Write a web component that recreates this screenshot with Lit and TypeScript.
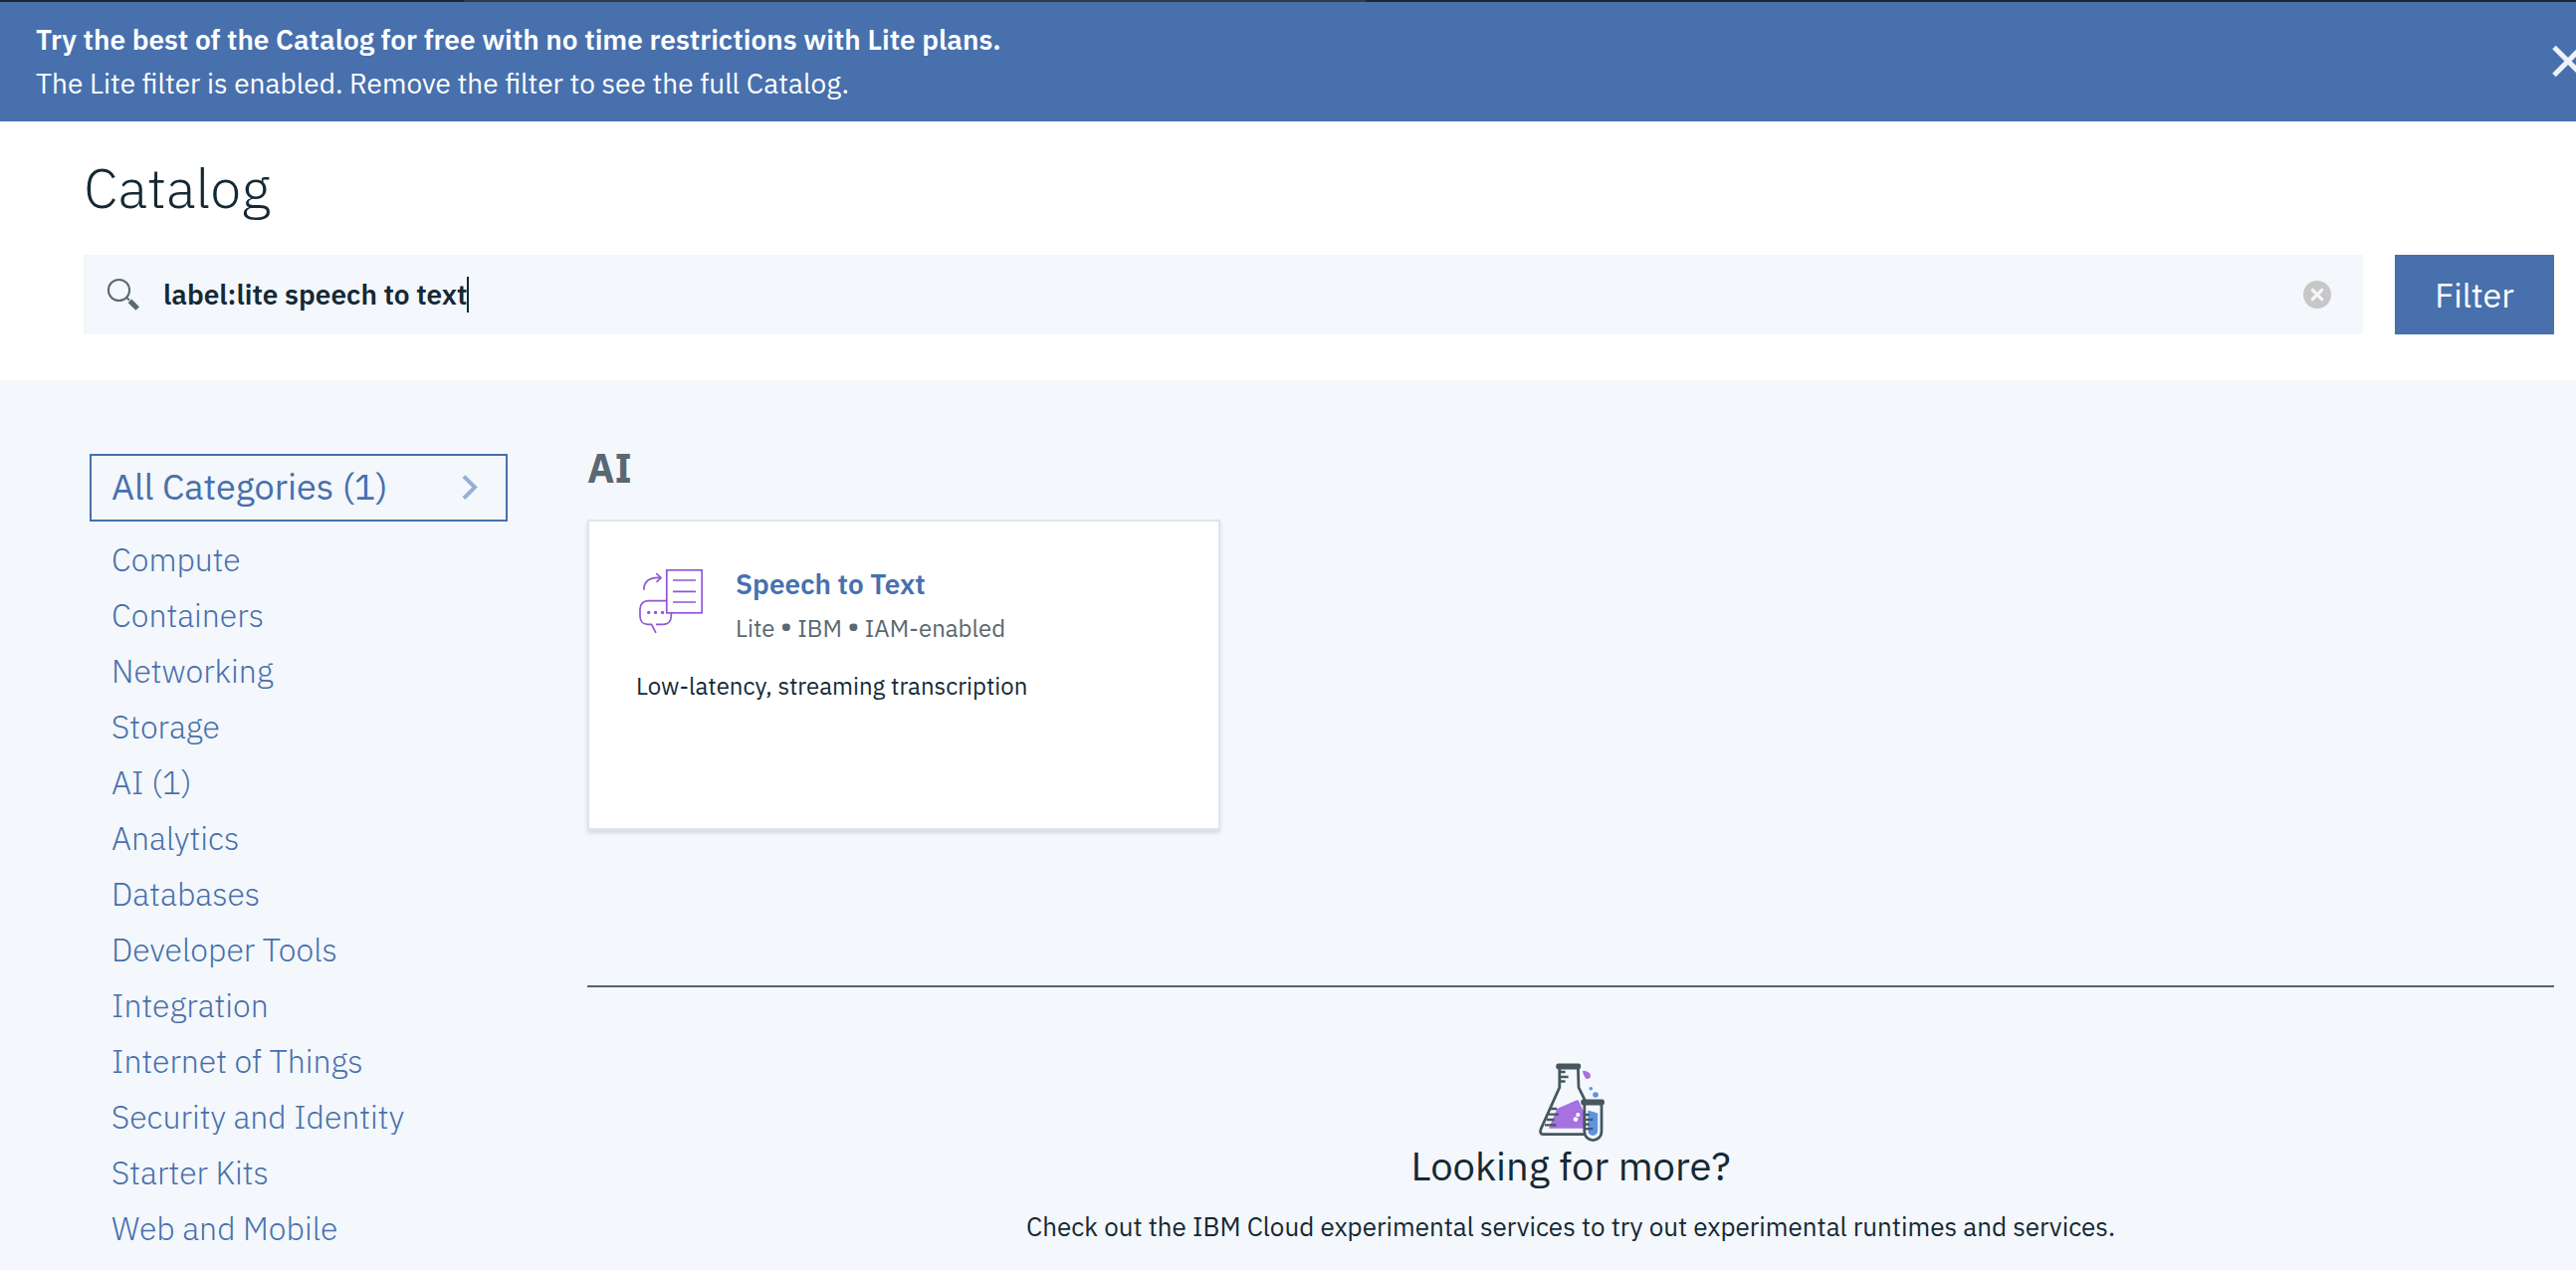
import { LitElement, html, css } from "lit";
import { customElement, property, state } from "lit/decorators.js";

interface Category {
  name: string;
  count?: number;
}

const CATEGORIES: Category[] = [
  { name: "Compute" },
  { name: "Containers" },
  { name: "Networking" },
  { name: "Storage" },
  { name: "AI", count: 1 },
  { name: "Analytics" },
  { name: "Databases" },
  { name: "Developer Tools" },
  { name: "Integration" },
  { name: "Internet of Things" },
  { name: "Security and Identity" },
  { name: "Starter Kits" },
  { name: "Web and Mobile" },
];

@customElement("lite-banner")
export class LiteBanner extends LitElement {
  static styles = css`
    :host {
      display: block;
      background: #4770ad;
      color: #fff;
    }
    .banner {
      display: flex;
      align-items: center;
      justify-content: space-between;
      padding: 16px 0 16px 36px;
      overflow: hidden;
    }
    p {
      margin: 0;
      font-size: 28px;
      line-height: 44px;
    }
    .lead {
      font-weight: 600;
    }
    .close {
      flex: none;
      margin-right: -8px;
      padding: 0;
      border: 0;
      background: none;
      color: #eef1f5;
      cursor: pointer;
    }
    .close svg {
      display: block;
    }
  `;

  render() {
    return html`
      <div class="banner" role="status">
        <div>
          <p class="lead">Try the best of the Catalog for free with no time restrictions with Lite plans.</p>
          <p>The Lite filter is enabled. Remove the filter to see the full Catalog.</p>
        </div>
        <button class="close" aria-label="Close">
          <svg width="34" height="34" viewBox="0 0 34 34" aria-hidden="true">
            <path d="M4 2.4L32 30.4M32 2.4L4 30.4" stroke="currentColor" stroke-width="5" fill="none" />
          </svg>
        </button>
      </div>
    `;
  }
}

@customElement("catalog-search")
export class CatalogSearch extends LitElement {
  static styles = css`
    :host {
      display: block;
      background: #fff;
    }
    header {
      padding: 30px 22px 46px 84px;
    }
    h1 {
      margin: 0 0 32px;
      font-size: 56px;
      line-height: 72px;
      font-weight: 300;
    }
    .row {
      display: flex;
      gap: 32px;
    }
    .box {
      flex: 1;
      display: flex;
      align-items: center;
      height: 80px;
      padding: 0 32px 0 22px;
      background: #f4f7fb;
    }
    .box label {
      display: flex;
      margin-right: 20px;
    }
    input {
      field-sizing: content;
      min-width: 0;
      padding: 0;
      border: 0;
      outline: 0;
      background: none;
      color: inherit;
      font: inherit;
      font-size: 28px;
      line-height: 44px;
      font-weight: 600;
    }
    .caret {
      width: 2px;
      height: 36px;
      background: #152935;
    }
    .clear {
      display: flex;
      margin-left: auto;
      padding: 0;
      border: 0;
      background: none;
      cursor: pointer;
    }
    .filter {
      width: 160px;
      border: 0;
      background: #4770ad;
      color: #fff;
      font: inherit;
      font-size: 34px;
      cursor: pointer;
    }
  `;

  @state() private query = "label:lite speech to text";

  render() {
    return html`
      <header>
        <h1>Catalog</h1>
        <div class="row">
          <div class="box">
            <label for="query" aria-label="Search the catalog">
              <svg width="38" height="36" viewBox="0 0 38 36" aria-hidden="true">
                <circle cx="13.5" cy="13.5" r="10.6" fill="none" stroke="#5a6872" stroke-width="2" />
                <path d="M21.6 21.2L24 23.6" stroke="#5a6872" stroke-width="2" />
                <path d="M24.4 24.4L32.2 32" stroke="#5a6872" stroke-width="5" />
              </svg>
            </label>
            <input
              id="query"
              type="text"
              .value=${this.query}
              @input=${(e: Event) => (this.query = (e.target as HTMLInputElement).value)}
            />
            <span class="caret"></span>
            <button class="clear" aria-label="Clear search" @click=${() => (this.query = "")}>
              <svg width="28" height="28" viewBox="0 0 28 28" aria-hidden="true">
                <circle cx="14" cy="14" r="14" fill="#c7c7c7" />
                <path d="M9.3 9.3L18.7 18.7M18.7 9.3L9.3 18.7" stroke="#f4f7fb" stroke-width="3.2" stroke-linecap="round" />
              </svg>
            </button>
          </div>
          <button class="filter">Filter</button>
        </div>
      </header>
    `;
  }
}

@customElement("category-nav")
export class CategoryNav extends LitElement {
  static styles = css`
    :host {
      display: block;
      padding-top: 8px;
    }
    a {
      color: #4770ad;
      text-decoration: none;
    }
    .all {
      display: flex;
      align-items: center;
      justify-content: space-between;
      padding: 6px 28px 8px 20px;
      border: 2px solid #4770ad;
      font-size: 36px;
      line-height: 50px;
    }
    ul {
      margin: 0;
      padding: 10px 0 0 22px;
      list-style: none;
    }
    li a {
      display: block;
      font-size: 32px;
      line-height: 56px;
      font-weight: 300;
    }
  `;

  @property({ attribute: false }) categories: Category[] = [];

  render() {
    return html`
      <nav aria-label="Categories">
        <a class="all" href="#all" aria-current="true">
          All Categories (1)
          <svg width="16" height="26" viewBox="0 0 16 26" aria-hidden="true">
            <path d="M2 2.6L13 13.6L2 24.6" fill="none" stroke="#97afd3" stroke-width="4" />
          </svg>
        </a>
        <ul>
          ${this.categories.map(
            (c) => html`<li><a href="#category">${c.count ? `${c.name} (${c.count})` : c.name}</a></li>`
          )}
        </ul>
      </nav>
    `;
  }
}

@customElement("service-card")
export class ServiceCard extends LitElement {
  static styles = css`
    :host {
      display: block;
      width: 636px;
      max-width: 100%;
    }
    article {
      box-sizing: border-box;
      min-height: 312px;
      padding: 41px 47px;
      border: 2px solid #dfe6eb;
      background: #fff;
      box-shadow: 0 3px 4px rgba(40, 60, 80, 0.14);
    }
    .head {
      display: flex;
      gap: 32px;
      margin-bottom: 14px;
    }
    h3,
    p {
      margin: 0;
      line-height: 44px;
    }
    h3 {
      font-size: 28px;
      font-weight: 600;
    }
    h3 a {
      color: #4770ad;
      text-decoration: none;
    }
    p {
      font-size: 24px;
    }
    .meta {
      display: flex;
      align-items: baseline;
      gap: 5px;
      color: #5a6872;
    }
    .dot {
      font-size: 32px;
      line-height: 28px;
    }
    svg {
      flex: none;
    }
  `;

  render() {
    return html`
      <article>
        <div class="head">
          <svg width="68" height="76" viewBox="1 -1 68 76" fill="none" stroke="#8f56d3" stroke-width="1.7" aria-hidden="true">
            <rect x="31.8" y="6.8" width="35.4" height="43" />
            <path d="M38 17H61M38 28.3H61M38 39H61" />
            <path d="M9 26.8C8.6 18.5 14 13.8 25.6 14.5M21.3 10L26 14.5L21.5 18.8" />
            <path d="M31.8 37.7H13C8 37.7 5 41.5 5 46V53C5 58.5 8.5 61.3 13 61.3H16.6L21 69.8M21 61.3H28C33 61.3 36.3 58 36.3 53V50" />
            <g fill="#8f56d3" stroke="none">
              <circle cx="13.7" cy="49.4" r="1.7" />
              <circle cx="20.6" cy="49.4" r="1.7" />
              <circle cx="27.6" cy="49.4" r="1.7" />
            </g>
          </svg>
          <div>
            <h3><a href="#speech-to-text">Speech to Text</a></h3>
            <p class="meta">
              <span>Lite</span><span class="dot">•</span><span>IBM</span><span class="dot">•</span><span>IAM-enabled</span>
            </p>
          </div>
        </div>
        <p>Low-latency, streaming transcription</p>
      </article>
    `;
  }
}

@customElement("looking-for-more")
export class LookingForMore extends LitElement {
  static styles = css`
    :host {
      display: block;
      padding-top: 76px;
      border-top: 2px solid #50656d;
      text-align: center;
    }
    svg {
      display: block;
      margin: 0 auto;
    }
    h2 {
      margin: 0 0 16px;
      font-size: 40px;
      line-height: 46px;
      font-weight: 400;
    }
    p {
      margin: 0;
      font-size: 26px;
      line-height: 44px;
    }
  `;

  render() {
    return html`
      <svg width="68" height="80" viewBox="0 0 68 80" fill="none" aria-hidden="true">
        <path d="M20.3 46L39.6 37.6Q41.4 36.8 42.2 38.6L47 49V65.8H12Z" fill="#a572e0" />
        <circle cx="41.3" cy="52" r="2.1" fill="#fff" />
        <circle cx="39" cy="56.6" r="2.4" fill="#fff" />
        <g stroke="#45575f" stroke-width="2.8">
          <path d="M22.8 5V24.5L3.9 66.8Q2.4 71.6 7 71.6H48" />
          <path d="M41.4 5L42 24.5L48.6 38" />
          <path d="M47.8 41V69A8.6 8.6 0 0 0 65 69V41" />
        </g>
        <rect x="19.2" y="0.6" width="25" height="5.8" rx="2.4" fill="#45575f" />
        <rect x="44.2" y="36.6" width="23.8" height="5.8" rx="2.4" fill="#45575f" />
        <path
          d="M24 9H28.6M24 14H31.6M24 18.5H28.6M14 46H20M12 51.6H21.8M10 57H17.4M8 62.4H19.4"
          stroke="#45575f"
          stroke-width="2.3"
        />
        <path d="M51.4 47.4L61.2 50.4V68A4.9 4.9 0 0 1 51.4 68Z" fill="#5b94e0" />
        <path d="M49 52H52.8M49 56.8H56.4M49 61.6H52.8M49 66.2H56.4" stroke="#45575f" stroke-width="2.3" />
        <path d="M46 8C49.5 7.6 54 9.4 54 12.8A3 3 0 0 1 48.4 14.4C47.3 12.6 46.2 10.6 46 8Z" fill="#a572e0" />
        <circle cx="54.3" cy="25.7" r="1.8" fill="#5b94e0" />
        <circle cx="59" cy="32" r="2.8" fill="#5b94e0" />
      </svg>
      <h2>Looking for more?</h2>
      <p>Check out the IBM Cloud experimental services to try out experimental runtimes and services.</p>
    `;
  }
}

@customElement("app-root")
export class AppRoot extends LitElement {
  static styles = css`
    :host {
      display: block;
      min-height: 100vh;
      background: #f4f7fb;
      color: #152935;
      font-family: "IBM Plex Sans", Roboto, "Liberation Sans", sans-serif;
    }
    .strip {
      display: grid;
      grid-template-columns: 18% 35% 1fr;
      height: 2px;
      background: #1b2834;
    }
    .strip-search {
      grid-column: 2;
      background: #2e3d45;
    }
    main {
      display: grid;
      grid-template-columns: 420px minmax(0, 1fr);
      gap: 80px;
      padding: 66px 22px 0 90px;
    }
    h2 {
      margin: 0 0 30px;
      color: #5a6872;
      font-size: 40px;
      line-height: 44px;
      font-weight: 700;
    }
    .results {
      margin-bottom: 156px;
    }
  `;

  render() {
    return html`
      <div class="strip"><div class="strip-search"></div></div>
      <lite-banner></lite-banner>
      <catalog-search></catalog-search>
      <main>
        <category-nav .categories=${CATEGORIES}></category-nav>
        <div>
          <section class="results">
            <h2>AI</h2>
            <service-card></service-card>
          </section>
          <looking-for-more></looking-for-more>
        </div>
      </main>
    `;
  }
}
